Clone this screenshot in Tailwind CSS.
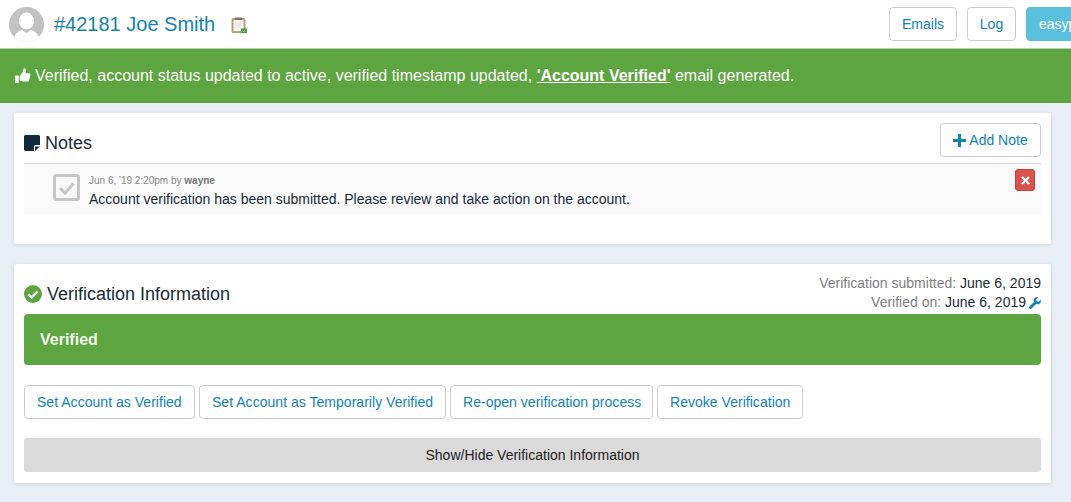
<!DOCTYPE html>
<html lang="en">
<head>
<meta charset="UTF-8">
<meta name="viewport" content="width=device-width, initial-scale=1.0">
<title>#42181 Joe Smith</title>
<script src="https://cdn.jsdelivr.net/npm/@tailwindcss/browser@4"></script>
</head>
<body class="h-[502px] overflow-hidden bg-[#e9eff4] font-['Liberation_Sans',Arial,sans-serif] text-[14px] text-[#1c2b36]">

<!-- top bar -->
<div class="flex h-[49px] items-center overflow-hidden border-b border-[#b9cdb0] bg-white">
    <div class="flex w-[889px] shrink-0 items-center pl-[9px]">
        <svg class="h-[35px] w-[35px] shrink-0" viewBox="0 0 35 35">
            <defs><clipPath id="av"><circle cx="17.5" cy="17.5" r="17.5"/></clipPath></defs>
            <circle cx="17.5" cy="17.5" r="17.5" fill="#c2c2c2"/>
            <g clip-path="url(#av)" fill="#fff">
                <ellipse cx="17.5" cy="14" rx="7.5" ry="8.5"/>
                <path d="M4 36c0-8 5-12 9-13l4.500 3 4.500-3c4 1 9 5 9 13z"/>
            </g>
        </svg>
        <h1 class="ml-[10px] text-[20px] leading-[24px] text-[#1184b2]">#42181 Joe Smith</h1>
        <svg class="ml-[16px] mt-[2px] h-[16px] w-[16px]" viewBox="0 0 16 16">
            <rect x="1" y="1.500" width="13" height="14" rx="1" fill="#c4a680" stroke="#a08a6c" stroke-width="0.800"/>
            <rect x="2.500" y="3" width="10" height="11" fill="#f8f8f5"/>
            <rect x="4" y="0.500" width="7" height="2.500" rx="0.500" fill="#77726a"/>
            <path d="M4 6h7M4 8h7M4 10h5" stroke="#d2d2cc" stroke-width="0.700"/>
            <rect x="10" y="11.500" width="6" height="4.500" fill="#4b9a3c"/>
            <path d="M11.500 13.800l1.200 1 1.800-2" stroke="#e8f5e0" stroke-width="0.800" fill="none"/>
        </svg>
    </div>
    <div class="flex shrink-0 gap-[10px]">
        <a class="flex h-[34px] w-[68px] items-center justify-center rounded border border-[#ccc] text-[#1184b2]">Emails</a>
        <a class="flex h-[34px] w-[49px] items-center justify-center rounded border border-[#ccc] text-[#1184b2]">Log</a>
        <a class="flex h-[34px] w-[90px] items-center rounded border border-[#5bc0de] bg-[#5bc0de] pl-[12px] text-white">easypost</a>
    </div>
</div>

<!-- alert -->
<div class="flex h-[54px] items-center bg-[#5da540] pl-[15px] text-[16px] text-white">
    <svg class="mr-[4px] h-[16px] w-[16px] shrink-0" viewBox="0 0 17 16" fill="#fff">
        <rect x="0" y="7.500" width="4" height="8" rx="0.500"/>
        <path d="M5 8l3-4c.5-1 .6-2.500 1-3.500.3-.7 2.300-.5 2.700 1 .3 1.200-.2 2.500-.7 3.500h4c1.200 0 1.800 1 1.500 2-.1.400-.3.700-.5.900.3.800.1 1.500-.4 2 .2.800 0 1.500-.6 2 .1 1.200-.6 2-1.800 2H9c-1.500 0-2.800-.6-4-1z"/>
    </svg>
    <span>Verified, account status updated to active, verified timestamp updated, <a class="font-bold underline">'Account Verified'</a> email generated.</span>
</div>

<div class="pl-[14px] pr-[20px] pt-[10px]">
    <!-- notes -->
    <section class="h-[131px] rounded-[2px] bg-white px-[10px] pt-[10px] shadow-[0_1px_4px_rgba(0,0,0,0.12)]">
        <div class="flex h-[41px] items-start justify-between border-b border-[#ddd]">
            <div class="flex items-center pt-[9px]">
                <svg class="mr-[5px] h-[16px] w-[16px]" viewBox="0 0 16 16" fill="#152a3a">
                    <path d="M1.500 0h13c.8 0 1.500.7 1.500 1.500V10h-4.500c-.8 0-1.500.7-1.500 1.500V16H1.500C.7 16 0 15.300 0 14.500v-13C0 .7.700 0 1.500 0z"/>
                    <path d="M11 11.500h4.800L11 16z"/>
                </svg>
                <h2 class="text-[18px] leading-[22px]">Notes</h2>
            </div>
            <a class="flex h-[34px] w-[101px] items-center justify-center rounded border border-[#ccc] text-[#1184b2]">
                <svg class="mr-[3px] h-[13px] w-[13px]" viewBox="0 0 13 13" fill="#1184b2"><path d="M5 0h3v5h5v3H8v5H5V8H0V5h5z"/></svg>
                Add Note
            </a>
        </div>
        <div class="relative flex h-[50px] bg-[#f9f9f9] pl-[29px] pt-[10px]">
            <svg class="h-[27px] w-[27px] shrink-0" viewBox="0 0 27 27" fill="none">
                <rect x="1.500" y="1.500" width="24" height="24" rx="2" stroke="#c6c6c6" stroke-width="3"/>
                <path d="M7 14l5 5 8.500-9.500" stroke="#c6c6c6" stroke-width="3"/>
            </svg>
            <div class="ml-[9px]">
                <p class="text-[10px] leading-[14px] text-[#8a8a8a]">Jun 6, '19 2:20pm by <b class="text-[#777]">wayne</b></p>
                <p class="mt-[3px] leading-[17px]">Account verification has been submitted. Please review and take action on the account.</p>
            </div>
            <button class="absolute right-[6px] top-[5px] flex h-[22px] w-[20px] items-center justify-center rounded-[3px] border border-[#c9403c] bg-[#d9534f]">
                <svg class="h-[9px] w-[9px]" viewBox="0 0 9 9" stroke="#fff" stroke-width="2.400"><path d="M1 1l7 7M8 1L1 8"/></svg>
            </button>
        </div>
    </section>

    <!-- verification -->
    <section class="mt-[20px] h-[219px] rounded-[2px] bg-white px-[10px] pt-[10px] shadow-[0_1px_4px_rgba(0,0,0,0.12)]">
        <div class="flex h-[40px] justify-between">
            <div class="flex items-center self-start pt-[9px]">
                <svg class="mr-[5px] h-[18px] w-[18px]" viewBox="0 0 18 18">
                    <circle cx="9" cy="9" r="9" fill="#5da540"/>
                    <path d="M4.500 9.300l3.200 3.200 5.800-6" stroke="#fff" stroke-width="2.400" fill="none"/>
                </svg>
                <h2 class="text-[18px] leading-[22px]">Verification Information</h2>
            </div>
            <div class="text-right leading-[19px] text-[#808080]">
                <div>Verification submitted: <span class="text-[#1c2b36]">June 6, 2019</span></div>
                <div class="flex items-center justify-end">Verified on:&nbsp;<span class="text-[#1c2b36]">June 6, 2019</span>
                    <svg class="ml-[3px] h-[12px] w-[12px]" viewBox="0 0 12 12" fill="#1184b2"><path d="M11.800 2.700 9.700 4.800 7.600 4.300 7.100 2.200 9.200.1C7.700-.3 6.100.3 5.300 1.500c-.7 1-.8 2.300-.3 3.400L.4 9.500c-.6.600-.6 1.500 0 2.100.6.600 1.500.6 2.100 0l4.600-4.600c1.100.5 2.400.4 3.400-.3 1.200-.8 1.800-2.400 1.300-4z"/></svg>
                </div>
            </div>
        </div>
        <div class="flex h-[51px] items-center rounded-[4px] bg-[#5da540] pl-[16px] text-[16px] font-bold text-[#f2fbec]">Verified</div>
        <div class="mt-[20px] flex gap-[4px] tracking-[0.03px]">
            <a class="flex h-[34px] w-[171px] items-center rounded border border-[#ccc] pl-[12px] text-[#1184b2]">Set Account as Verified</a>
            <a class="flex h-[34px] w-[247px] items-center rounded border border-[#ccc] pl-[12px] text-[#1184b2]">Set Account as Temporarily Verified</a>
            <a class="flex h-[34px] w-[203px] items-center rounded border border-[#ccc] pl-[12px] text-[#1184b2]">Re-open verification process</a>
            <a class="flex h-[34px] w-[146px] items-center rounded border border-[#ccc] pl-[12px] text-[#1184b2]">Revoke Verification</a>
        </div>
        <button class="mt-[19px] flex h-[34px] w-full items-center justify-center rounded-[3px] bg-[#dadada] text-[#222]">Show/Hide Verification Information</button>
    </section>
</div>

</body>
</html>
